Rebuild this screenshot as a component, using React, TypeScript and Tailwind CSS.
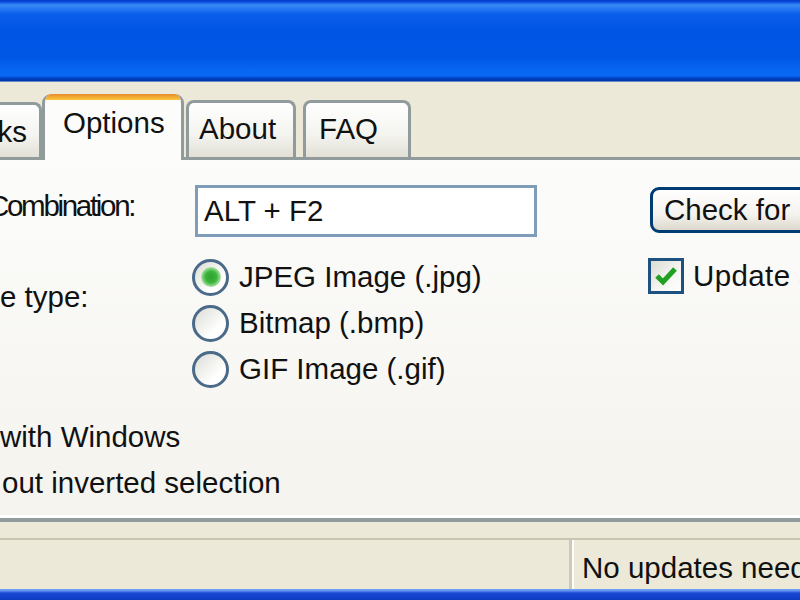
import React from "react";

function Radio({ checked, label }: { checked?: boolean; label: string }) {
  return (
    <div className="flex items-center h-[46px]">
      <div className="w-[37px] h-[37px] rounded-full border-[3px] border-[#4a6a8a] bg-[linear-gradient(135deg,#dcdcd5,#ffffff_70%)] flex items-center justify-center shrink-0">
        {checked && (
          <div className="w-[20px] h-[20px] rounded-full bg-[radial-gradient(circle,#2ea12e_0%,#3cb43c_40%,#a9e2a0_70%,#eef8ea_100%)]" />
        )}
      </div>
      <span className="ml-[10px] whitespace-nowrap">{label}</span>
    </div>
  );
}

export default function App() {
  return (
    <div className="w-[800px] h-[600px] overflow-hidden flex flex-col bg-[#ece9d8] text-[29.5px] leading-none text-[#111] font-['Liberation_Sans',Arial,sans-serif]">
      {/* Title bar */}
      <div className="h-[82px] shrink-0 bg-[linear-gradient(180deg,#0038c8_0px,#0a4fe0_2px,#3a8af6_5px,#2a7cf4_8px,#0a5eea_14px,#0055e5_30px,#0057e6_58px,#0866f2_70px,#0868f4_76px,#0043c4_78px,#0036a8_81px,#c9d7ee_82px)]" />

      {/* Tabs */}
      <div className="h-[75px] shrink-0 flex items-end relative z-10">
        <div className="w-[42px] h-[55px] border-[3px] border-l-0 border-b-0 border-[#919b9c] rounded-tr-[8px] bg-[linear-gradient(180deg,#ffffff,#f3f3ef_60%,#e2e0d6)] flex justify-end pr-[12px] pt-[12px]">
          <span>ks</span>
        </div>
        <div className="w-[142px] h-[66px] -mb-[3px] border-x-[3px] border-[#919b9c] rounded-t-[9px] bg-[#fcfcfb] flex flex-col overflow-hidden">
          <div className="h-[6px] bg-[linear-gradient(180deg,#e68b2c,#ffc73c)]" />
          <span className="pl-[18px] pt-[8px]">Options</span>
        </div>
        <div className="w-[110px] h-[57px] ml-[2px] border-[3px] border-b-0 border-[#919b9c] rounded-t-[8px] bg-[linear-gradient(180deg,#ffffff,#f3f3ef_60%,#e2e0d6)] pl-[10px] pt-[11px]">
          About
        </div>
        <div className="w-[108px] h-[57px] ml-[7px] border-[3px] border-b-0 border-[#919b9c] rounded-t-[8px] bg-[linear-gradient(180deg,#ffffff,#f3f3ef_60%,#e2e0d6)] pl-[13px] pt-[11px]">
          FAQ
        </div>
      </div>

      {/* Panel */}
      <div className="h-[365px] shrink-0 border-t-[3px] border-b-[4px] border-[#919b9c] bg-[linear-gradient(180deg,#fcfcfb,#f4f3ee)] shadow-[inset_0_-3px_0_#ffffff] pt-[25px]">
        <div className="grid grid-cols-[193px_455px_1fr]">
          {/* Row 1 */}
          <div className="flex items-center h-[52px] overflow-hidden">
            <span className="-ml-[12px] tracking-[-2.3px] whitespace-nowrap -mt-[10px]">Combination:</span>
          </div>
          <div className="h-[52px]">
            <div className="ml-[2px] w-[342px] h-[52px] border-[3px] border-[#7f9db9] bg-white flex items-center pl-[6px]">
              ALT + F2
            </div>
          </div>
          <div className="h-[52px] pt-[2px] pl-[2px]">
            <div className="w-[220px] h-[46px] border-[3px] border-[#003c74] rounded-[9px] bg-[linear-gradient(180deg,#ffffff,#f4f3ee_60%,#dcd8cc)] flex items-center pl-[11px] whitespace-nowrap">
              Check for updates
            </div>
          </div>

          {/* Row 2 */}
          <div className="pt-[45px] overflow-hidden whitespace-nowrap">e type:</div>
          <div className="pt-[17px] -ml-[1px]">
            <Radio checked label="JPEG Image (.jpg)" />
            <Radio label="Bitmap (.bmp)" />
            <Radio label="GIF Image (.gif)" />
          </div>
          <div className="pt-[21px]">
            <div className="flex items-center">
              <div className="w-[36px] h-[36px] border-[3px] border-[#1c5180] bg-[linear-gradient(135deg,#dcdcd5,#f6f6f3_60%,#ffffff)] flex items-center justify-center shrink-0">
                <svg width="22" height="20" viewBox="0 0 22 20">
                  <path d="M2 10 L8 16 L20 3" fill="none" stroke="#21a121" strokeWidth="5" strokeLinejoin="miter" />
                </svg>
              </div>
              <span className="ml-[9px] whitespace-nowrap tracking-[0.4px]">Update automatically</span>
            </div>
          </div>
        </div>

        <div className="mt-[22px] flex flex-col whitespace-nowrap">
          <div className="h-[46px] flex items-center">with Windows</div>
          <div className="h-[46px] flex items-center pl-[2px]">out inverted selection</div>
        </div>
      </div>

      {/* Gap */}
      <div className="h-[16px] shrink-0" />

      {/* Status bar */}
      <div className="h-[51px] shrink-0 border-t-[2px] border-[#c9c5b3] flex">
        <div className="w-[572px] shrink-0 border-r-[3px] border-[#cdc9b8]" />
        <div className="shrink-0 border-l-[2px] border-white pl-[8px] pt-[13px] whitespace-nowrap">No updates needed</div>
      </div>

      {/* Bottom border */}
      <div className="h-[11px] shrink-0 bg-[linear-gradient(180deg,#7aa6f3_0px,#5a8cf0_2px,#1a48d2_4px,#0f3bc4_11px)]" />
    </div>
  );
}
